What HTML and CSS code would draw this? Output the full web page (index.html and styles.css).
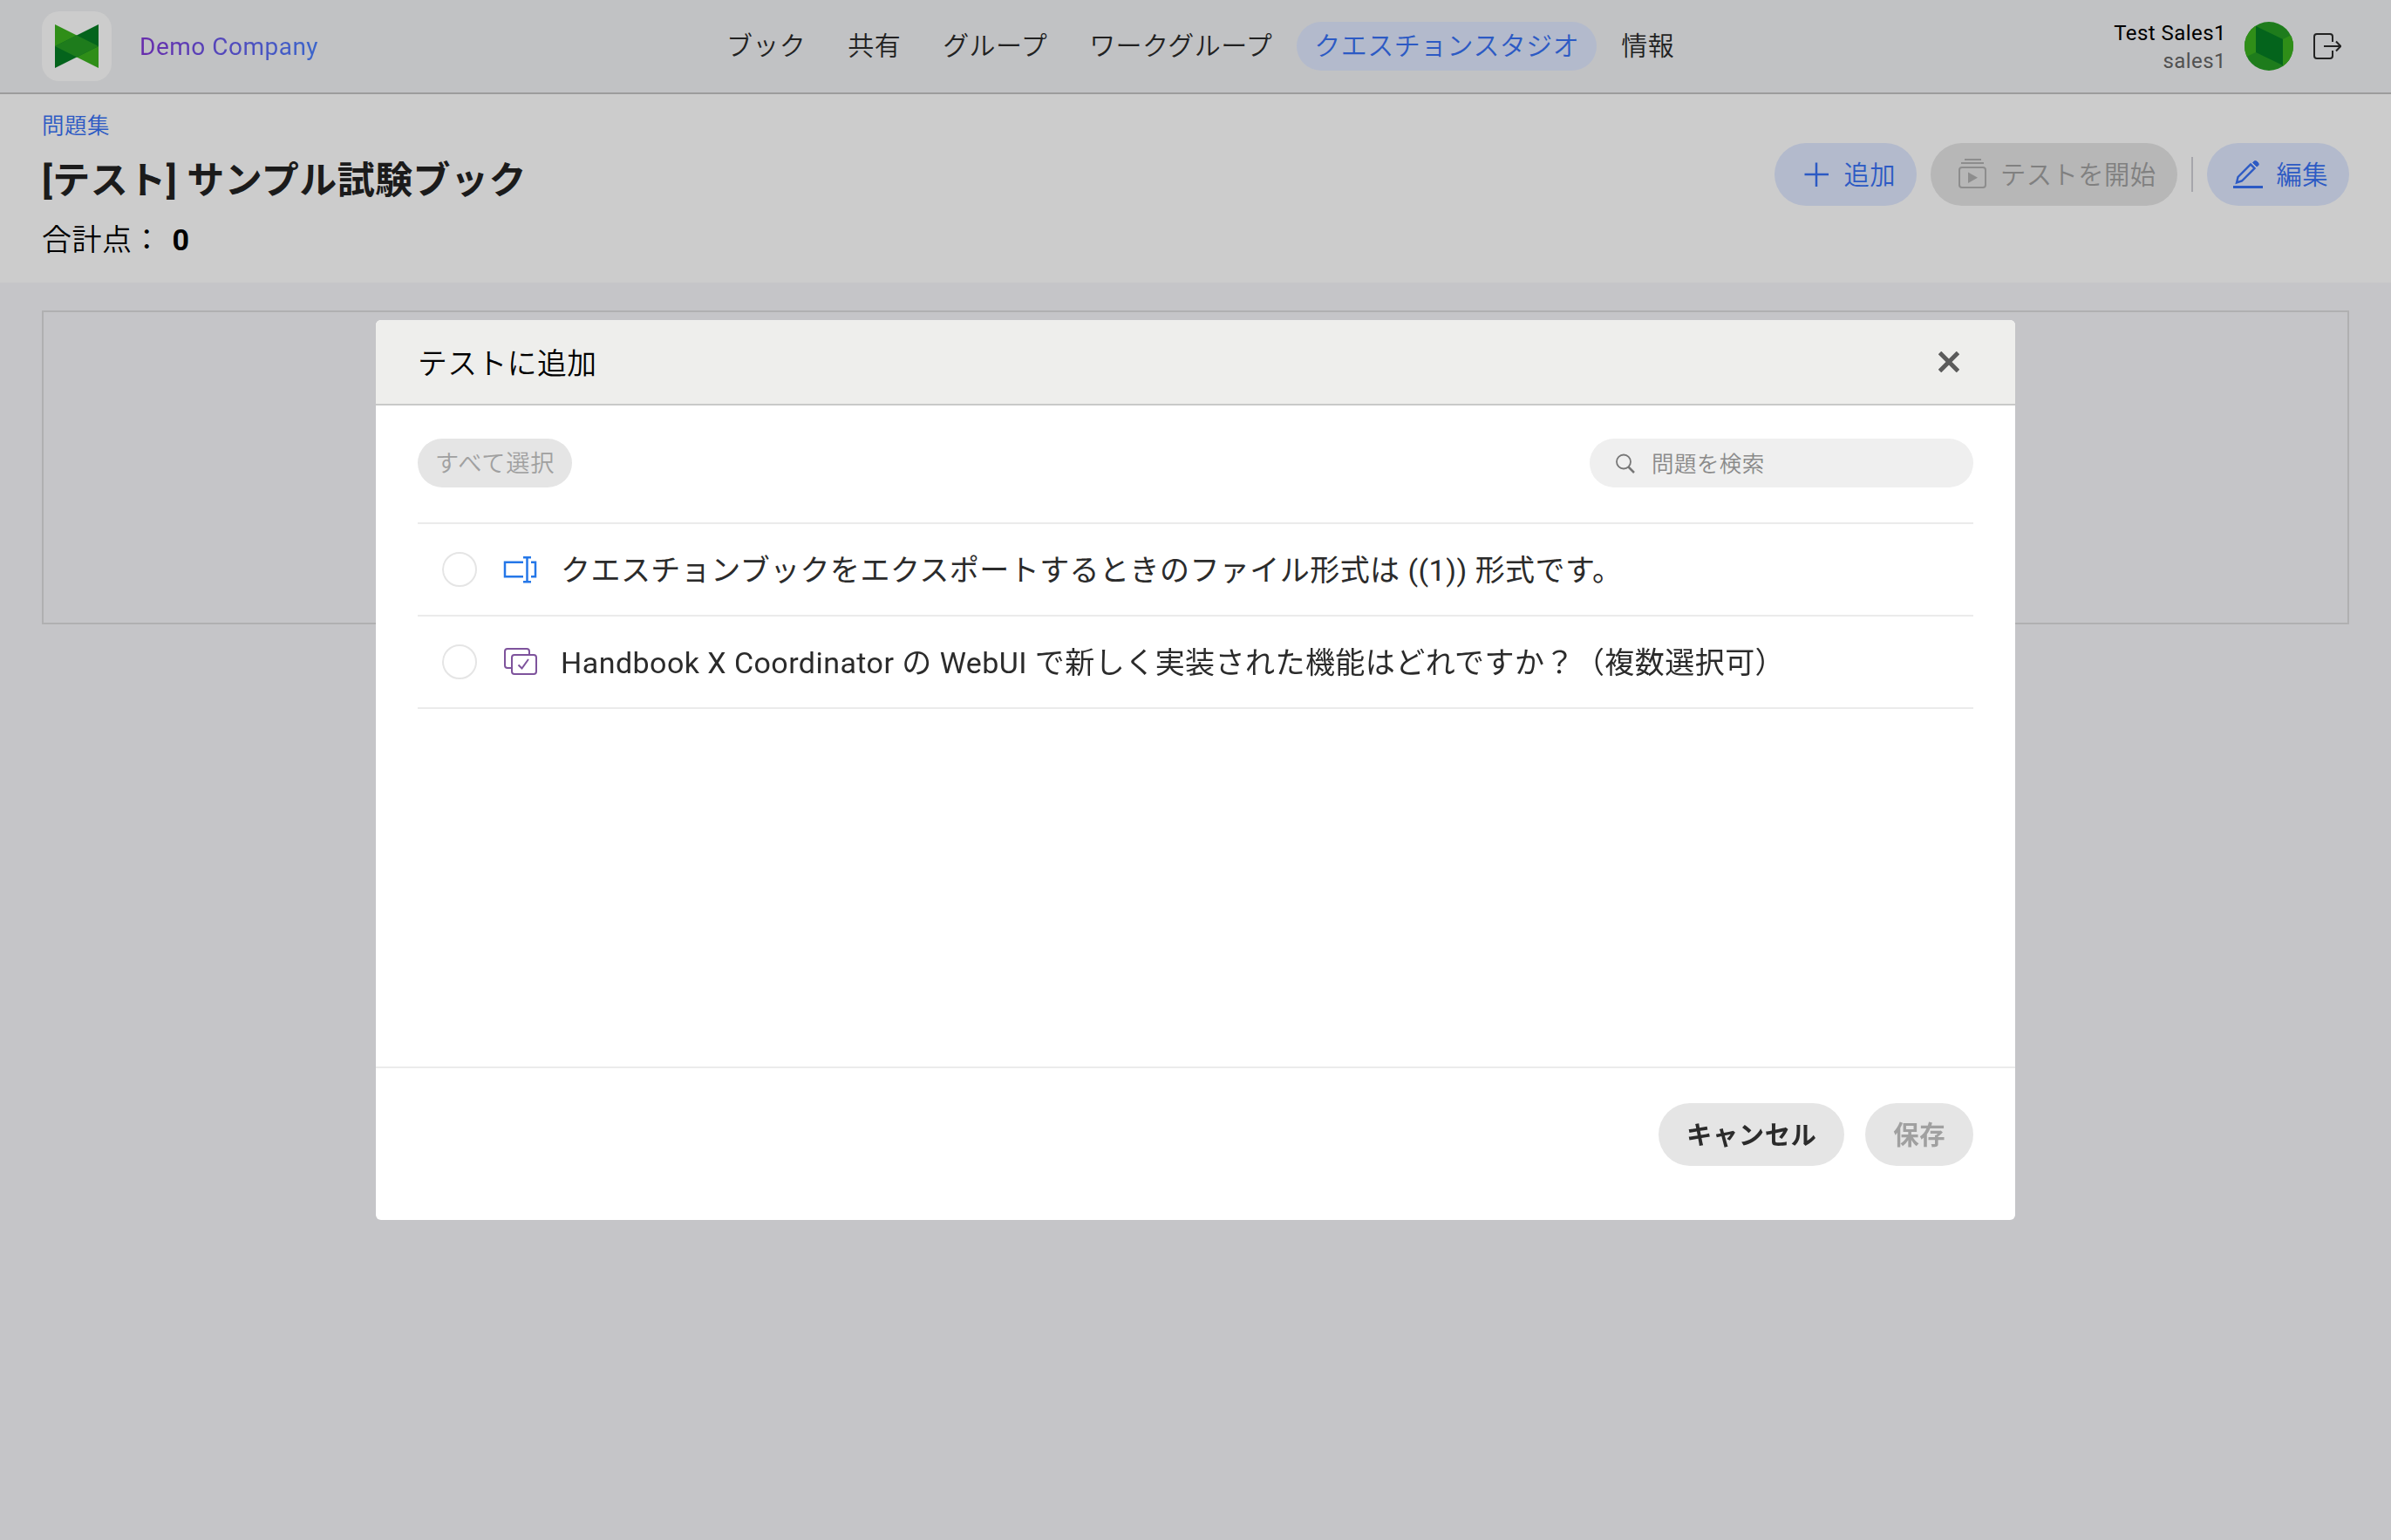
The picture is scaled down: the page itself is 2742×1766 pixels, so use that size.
FILE: index.html
```html
<!DOCTYPE html>
<html lang="ja">
<head>
    <meta charset="UTF-8">
    <meta name="viewport" content="width=device-width, initial-scale=1.0">
    <title>[テスト] サンプル試験ブック</title>
    <link rel="stylesheet" href="styles.css">
</head>
<body>

    <header class="topbar">
        <div class="brand">
            <div class="logo">
                <svg width="50" height="50" viewBox="0 0 50 50">
                    <path d="M0 0L50 25V50L0 25Z" fill="#3bb21e"/>
                    <path d="M50 0L0 25V50L50 25Z" fill="#057d24"/>
                    <path d="M0 25L25 12.5L50 25L25 37.5Z" fill="#269c23"/>
                </svg>
            </div>
            <span class="company">Demo Company</span>
        </div>
        <nav class="nav">
            <a>ブック</a>
            <a>共有</a>
            <a>グループ</a>
            <a>ワークグループ</a>
            <a class="active">クエスチョンスタジオ</a>
            <a>情報</a>
        </nav>
        <div class="user">
            <div class="user-name">
                <div>Test Sales1</div>
                <div class="user-id">sales1</div>
            </div>
            <svg class="avatar" width="56" height="56" viewBox="0 0 56 56">
                <rect width="56" height="56" fill="#269c23"/>
                <path d="M0 0L13 5V35L0 41Z" fill="#3bb21e"/>
                <path d="M44 20L56 14V56H44Z" fill="#3bb21e"/>
                <path d="M13 5L44 20V50L13 35Z" fill="#057d24"/>
            </svg>
            <svg class="logout" width="32" height="30" viewBox="0 0 32 30" fill="none" stroke="#2b2b2b" stroke-width="2">
                <path d="M22 10V4a3 3 0 0 0-3-3H4a3 3 0 0 0-3 3v22a3 3 0 0 0 3 3h15a3 3 0 0 0 3-3v-6"/>
                <path d="M12 15H31M26 9.500L31.300 15L26 20.500"/>
            </svg>
        </div>
    </header>

    <section class="page-head">
        <div>
            <a class="crumb">問題集</a>
            <h1>[テスト] サンプル試験ブック</h1>
            <p class="score">合計点： <b>0</b></p>
        </div>
        <div class="actions">
            <button class="btn">
                <svg width="40" height="40" viewBox="0 0 40 40" fill="none" stroke="currentColor" stroke-width="2.500">
                    <path d="M10.500 20H38M24 6.500V34"/>
                </svg>
                <span>追加</span>
            </button>
            <button class="btn disabled">
                <svg width="40" height="40" viewBox="0 0 40 40" fill="none" stroke="currentColor" stroke-width="2">
                    <path d="M15 3H34M11 7H37"/>
                    <rect x="9" y="12" width="30" height="23" rx="3"/>
                    <path d="M19 17.500V30L30 23.700Z" fill="currentColor" stroke="none"/>
                </svg>
                <span>テストを開始</span>
            </button>
            <span class="divider"></span>
            <button class="btn">
                <svg width="40" height="40" viewBox="0 0 40 40" fill="none" stroke="currentColor" stroke-width="2.400">
                    <path d="M6 34.500H40" stroke-width="3"/>
                    <path d="M10 29.500L11.500 23L26 8.500L30.500 13L16 27.500Z"/>
                    <path d="M28.500 6.500Q31 3 34 6T33 11Z" fill="currentColor" stroke-width="1"/>
                </svg>
                <span>編集</span>
            </button>
        </div>
    </section>

    <main class="content">
        <div class="empty-box"></div>
    </main>

    <div class="overlay">
        <div class="modal">
            <div class="modal-head">
                <h2>テストに追加</h2>
                <svg class="close" width="24" height="24" viewBox="0 0 24 24" stroke="#5b5b5b" stroke-width="5">
                    <path d="M1.500 1.500L22.500 22.500M22.500 1.500L1.500 22.500"/>
                </svg>
            </div>
            <div class="modal-body">
                <div class="toolbar">
                    <button class="select-all">すべて選択</button>
                    <div class="search">
                        <svg width="22" height="23" viewBox="0 0 22 23" fill="none" stroke="#777">
                            <circle cx="9" cy="9.500" r="8" stroke-width="1.800"/>
                            <path d="M14.500 15.500L21 22" stroke-width="2.500"/>
                        </svg>
                        <span>問題を検索</span>
                    </div>
                </div>
                <ul class="questions">
                    <li>
                        <span class="radio"></span>
                        <svg width="40" height="40" viewBox="0 0 40 40" fill="none" stroke="#2577e8" stroke-width="2.500">
                            <path d="M24 11.700H3V28.300H24M33 11.700H38V28.300H33"/>
                            <path d="M24 6.200H33M24 34.300H33M28.500 6V34"/>
                        </svg>
                        <span class="question">クエスチョンブックをエクスポートするときのファイル形式は ((1)) 形式です。</span>
                    </li>
                    <li>
                        <span class="radio"></span>
                        <svg width="40" height="40" viewBox="0 0 40 40" fill="none" stroke="#7e539c" stroke-width="2">
                            <path d="M11 27H6a3 3 0 0 1-3-3V8a3 3 0 0 1 3-3H28a3 3 0 0 1 3 3v4"/>
                            <rect x="11" y="12" width="28" height="22" rx="3"/>
                            <path d="M18.500 23.500L22.500 27.500L30 17"/>
                        </svg>
                        <span class="question">Handbook X Coordinator の WebUI で新しく実装された機能はどれですか？（複数選択可）</span>
                    </li>
                </ul>
            </div>
            <div class="modal-foot">
                <button class="foot-btn">キャンセル</button>
                <button class="foot-btn disabled">保存</button>
            </div>
        </div>
    </div>

</body>
</html>
```
FILE: styles.css
```css
* {
    box-sizing: border-box;
}
body {
    margin: 0;
    min-height: 100vh;
    background-color: #f7f7fa;
    color: #000;
    font-family: Roboto, "Noto Sans CJK JP", sans-serif;
    font-size: 34px;
    letter-spacing: 0.45px;
}
h1, h2, p, ul {
    margin: 0;
    padding: 0;
}
button {
    border: none;
    font-family: inherit;
    letter-spacing: inherit;
    white-space: nowrap;
}
svg {
    flex-shrink: 0;
}
.topbar {
    display: flex;
    justify-content: space-between;
    align-items: center;
    height: 108px;
    padding: 0 57px 0 48px;
    background: #f2f3f6;
    border-bottom: 2px solid #c3c3c4;
}
.brand, .user {
    display: flex;
    align-items: center;
    width: 600px;
}
.brand {
    width: 620px;
}
.user {
    justify-content: flex-end;
}
.logo {
    display: flex;
    align-items: center;
    justify-content: center;
    width: 80px;
    height: 80px;
    margin-right: 32px;
    border-radius: 20px;
    background: #fff;
}
.company {
    font-size: 28px;
    letter-spacing: 0.5px;
    background: linear-gradient(90deg, #8338d8, #4a80ff);
    -webkit-background-clip: text;
    background-clip: text;
    color: transparent;
}
.nav {
    display: flex;
    gap: 8px;
}
.nav a {
    height: 56px;
    padding: 0 20px;
    border-radius: 28px;
    font-size: 30px;
    font-weight: 350;
    line-height: 56px;
    color: #2b2b2b;
}
.nav a.active {
    background: #e0e9ff;
    color: #3871f5;
}
.user-name {
    margin-right: 21px;
    padding-top: 1px;
    font-size: 24px;
    line-height: 32px;
    text-align: right;
}
.user-id {
    color: #666;
}
.avatar {
    border-radius: 50%;
    margin-right: 23px;
}
.page-head {
    display: flex;
    justify-content: space-between;
    height: 216px;
    padding: 17px 48px 0;
    background: #fff;
}
.crumb {
    display: block;
    font-size: 25.5px;
    font-weight: 350;
    line-height: 38px;
    color: #3871f5;
}
h1 {
    margin-top: 12px;
    font-size: 43px;
    line-height: 64px;
    color: #222;
}
.score {
    margin-top: 9px;
    font-size: 34px;
    font-weight: 350;
    line-height: 54px;
}
.score b {
    margin-left: 3px;
    font-weight: 700;
}
.actions {
    display: flex;
    align-items: center;
    gap: 16px;
    height: 72px;
    margin-top: 39px;
}
.btn {
    display: flex;
    align-items: center;
    gap: 16px;
    height: 72px;
    padding: 0 24px;
    border-radius: 36px;
    background: #e0e9ff;
    color: #3871f5;
    font-size: 29.3px;
    font-weight: 350;
}
.btn span {
    padding-bottom: 5px;
}
.btn.disabled {
    background: #e5e5e5;
    color: #a0a0a0;
}
.btn.disabled svg {
    opacity: 0.75;
}
.divider {
    width: 2px;
    height: 40px;
    background: #d0d0d6;
}
.content {
    padding: 32px 48px;
}
.empty-box {
    height: 360px;
    border: 2px solid #dcdcde;
}
.overlay {
    position: fixed;
    inset: 0;
    display: flex;
    align-items: center;
    justify-content: center;
    background: rgba(0, 0, 0, 0.2);
}
.modal {
    display: flex;
    flex-direction: column;
    width: 1880px;
    height: 1032px;
    border-radius: 6px;
    background: #fff;
    overflow: hidden;
}
.modal-head {
    display: flex;
    align-items: center;
    justify-content: space-between;
    height: 98px;
    padding: 0 64px 0 48px;
    background: #eeeeec;
    border-bottom: 2px solid #c8c9c8;
}
h2 {
    padding-bottom: 2px;
    font-size: 33.8px;
    font-weight: 350;
}
.modal-body {
    flex: 1;
    padding: 38px 48px 0;
}
.toolbar {
    display: flex;
    justify-content: space-between;
    margin-bottom: 40px;
}
.select-all {
    height: 56px;
    padding: 0 20px 4px;
    border-radius: 28px;
    background: #e5e5e5;
    color: #a0a0a0;
    font-size: 27.2px;
    letter-spacing: 0.9px;
    font-weight: 350;
}
.search {
    display: flex;
    align-items: center;
    gap: 19px;
    width: 440px;
    height: 56px;
    padding-left: 30px;
    border-radius: 28px;
    background: #efefef;
    color: #8a8a8a;
    font-size: 25.5px;
    font-weight: 350;
}
.search span {
    padding-bottom: 4px;
}
.questions {
    list-style: none;
    border-top: 2px solid #ebebeb;
}
.questions li {
    display: flex;
    align-items: center;
    height: 106px;
    padding-left: 28px;
    border-bottom: 2px solid #ebebeb;
    color: #2b2b2b;
    white-space: nowrap;
}
.questions svg {
    margin: 0 27px 0 29px;
}
.question {
    padding-bottom: 4px;
}
.radio {
    width: 40px;
    height: 40px;
    border: 2px solid #e5e5e5;
    border-radius: 50%;
}
.modal-foot {
    display: flex;
    justify-content: flex-end;
    gap: 24px;
    height: 176px;
    padding: 40px 48px 0;
    border-top: 2px solid #ebebeb;
}
.foot-btn {
    height: 72px;
    padding: 0 32px 4px;
    border-radius: 36px;
    background: #e5e5e5;
    color: #2b2b2b;
    font-size: 29.4px;
    font-weight: 700;
}
.foot-btn.disabled {
    color: #a0a0a0;
}
```
